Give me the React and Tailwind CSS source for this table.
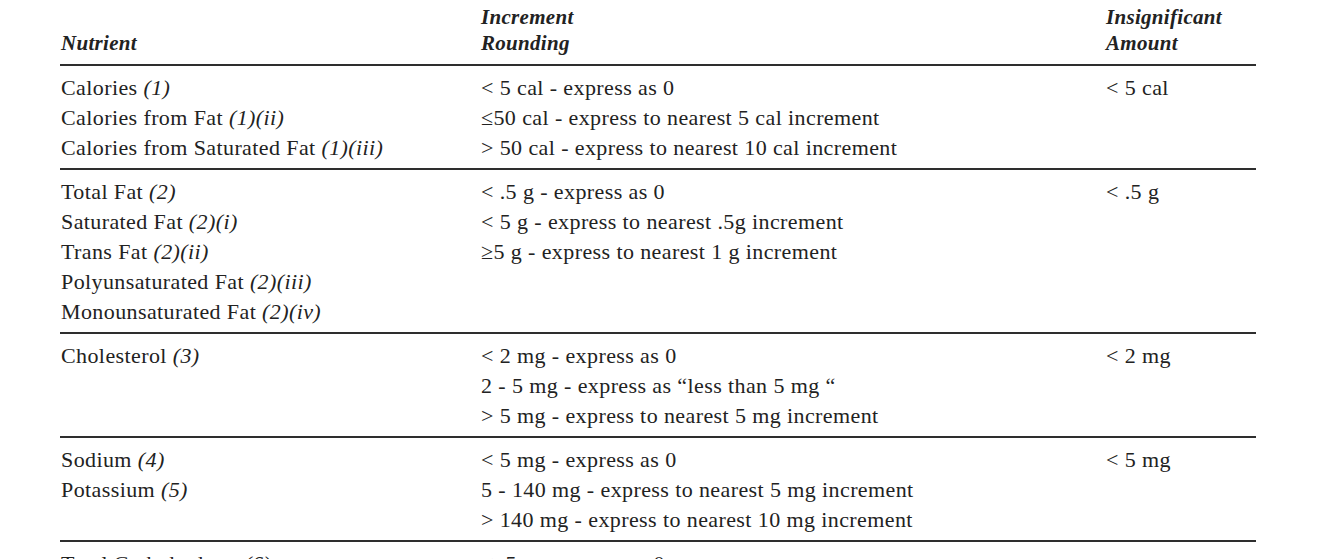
import React from "react";

const rows = [
  {
    nutrients: [
      ["Calories ", "(1)"],
      ["Calories from Fat ", "(1)(ii)"],
      ["Calories from Saturated Fat ", "(1)(iii)"],
    ],
    rounding: [
      "< 5 cal - express as 0",
      "≤50 cal - express to nearest 5 cal increment",
      "> 50 cal - express to nearest 10 cal increment",
    ],
    amount: "< 5 cal",
  },
  {
    nutrients: [
      ["Total Fat ", "(2)"],
      ["Saturated Fat ", "(2)(i)"],
      ["Trans Fat ", "(2)(ii)"],
      ["Polyunsaturated Fat ", "(2)(iii)"],
      ["Monounsaturated Fat ", "(2)(iv)"],
    ],
    rounding: [
      "< .5 g - express as 0",
      "< 5 g - express to nearest .5g increment",
      "≥5 g - express to nearest 1 g increment",
    ],
    amount: "< .5 g",
  },
  {
    nutrients: [["Cholesterol ", "(3)"]],
    rounding: [
      "< 2 mg - express as 0",
      "2 - 5 mg - express as “less than 5 mg “",
      "> 5 mg - express to nearest 5 mg increment",
    ],
    amount: "< 2 mg",
  },
  {
    nutrients: [
      ["Sodium ", "(4)"],
      ["Potassium ", "(5)"],
    ],
    rounding: [
      "< 5 mg - express as 0",
      "5 - 140 mg - express to nearest 5 mg increment",
      "> 140 mg - express to nearest 10 mg increment",
    ],
    amount: "< 5 mg",
  },
  {
    nutrients: [["Total Carbohydrate ", "(6)"]],
    rounding: ["< .5 g - express as 0"],
    amount: "",
  },
];

const App = () => {
  return (
    <div className="h-[559px] w-[1344px] overflow-hidden bg-white text-[#222] font-['Liberation_Serif',serif]">
      <div className="ml-[60px] w-[1196px]">
        {/* header */}
        <div className="grid grid-cols-[420px_625px_1fr] pt-[4px] pb-[8px] text-[21px] leading-[26px] tracking-[0.3px] italic font-bold">
          <div className="pl-[1px] flex items-end">Nutrient</div>
          <div className="pl-[1px]">
            Increment
            <br />
            Rounding
          </div>
          <div className="pl-[1px]">
            Insignificant
            <br />
            Amount
          </div>
        </div>
        {rows.map((row, i) => (
          <div key={i} className="border-t-2 border-[#2e2e2e]">
            <div className="grid grid-cols-[420px_625px_1fr] pt-[7px] pb-[5px] text-[22px] leading-[30px] tracking-[0.4px]">
              <div className="pl-[1px]">
                {row.nutrients.map((n) => (
                  <div key={n[0]}>
                    {n[0]}
                    <i>{n[1]}</i>
                  </div>
                ))}
              </div>
              <div className="pl-[1px]">
                {row.rounding.map((r) => (
                  <div key={r}>{r}</div>
                ))}
              </div>
              <div className="pl-[1px]">{row.amount}</div>
            </div>
          </div>
        ))}
      </div>
    </div>
  );
};

export default App;
